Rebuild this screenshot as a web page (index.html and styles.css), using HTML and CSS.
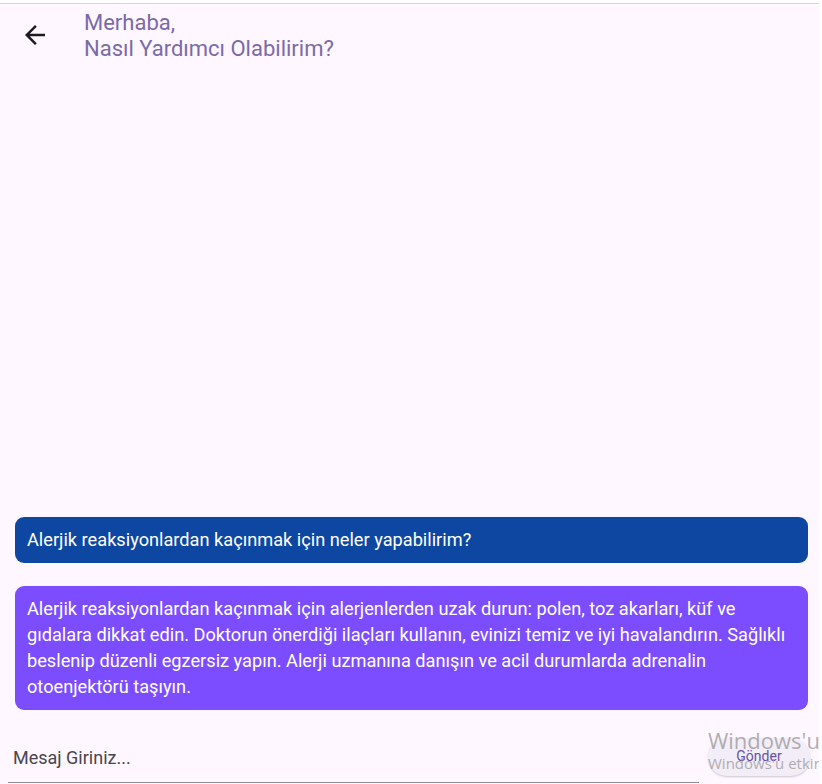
FILE: index.html
```html
<!DOCTYPE html>
<html lang="tr">
<head>
<meta charset="utf-8">
<title>Sohbet</title>
<link rel="stylesheet" href="styles.css">
</head>
<body>
<div class="app">
  <header class="topbar">
    <button class="back" aria-label="Geri">
      <svg width="30" height="30" viewBox="0 0 24 24"><path d="M20 11H7.83l5.59-5.59L12 4l-8 8 8 8 1.41-1.41L7.83 13H20v-2z" fill="#1d1b20"/></svg>
    </button>
    <h1 class="title">Merhaba,<br>Nasıl Yardımcı Olabilirim?</h1>
  </header>
  <main class="messages">
    <div class="bubble user">Alerjik reaksiyonlardan kaçınmak için neler yapabilirim?</div>
    <div class="bubble bot">Alerjik reaksiyonlardan kaçınmak için alerjenlerden uzak durun: polen, toz akarları, küf ve gıdalara dikkat edin. Doktorun önerdiği ilaçları kullanın, evinizi temiz ve iyi havalandırın. Sağlıklı beslenip düzenli egzersiz yapın. Alerji uzmanına danışın ve acil durumlarda adrenalin otoenjektörü taşıyın.</div>
  </main>
  <footer class="composer">
    <div class="field"><span class="placeholder">Mesaj Giriniz...</span></div>
    <button class="send">Gönder</button>
  </footer>
  <div class="watermark"><span class="wm1">Windows'u</span><span class="wm2">Windows'u etkinleştir</span></div>
</div>
</body>
</html>
```
FILE: styles.css
```css
html, body {
  margin: 0;
  padding: 0;
  background: #ffffff;
  overflow: hidden;
}
.app {
  position: relative;
  margin-top: 3px;
  border-top: 1px solid #d6d6d6;
  width: 819px;
  height: 780px;
  background: #fef7ff;
  display: flex;
  flex-direction: column;
  font-family: Roboto, "Noto Sans", sans-serif;
  overflow: hidden;
}
.topbar {
  display: flex;
  align-items: flex-start;
  padding: 6px 0 0 0;
  height: 64px;
  box-sizing: border-box;
}
.back {
  border: 0;
  background: transparent;
  width: 40px;
  height: 40px;
  margin: 5px 0 0 15px;
  padding: 0;
  display: flex;
  align-items: center;
  justify-content: center;
}
.title {
  margin: 0 0 0 29px;
  font-size: 22px;
  line-height: 26px;
  font-weight: 400;
  color: #7a6aa8;
}
.messages {
  flex: 1;
  display: flex;
  flex-direction: column;
  justify-content: flex-end;
  gap: 23px;
  padding: 0 11px 4px 15px;
}
.bubble {
  border-radius: 9px;
  color: #ffffff;
  font-size: 18.2px;
  line-height: 26px;
  padding: 10px 12px;
}
.user {
  background: #0d47a1;
}
.bot {
  background: #7c4dff;
}
.composer {
  display: flex;
  align-items: flex-end;
  height: 70px;
  box-sizing: border-box;
  padding: 0 9px 1px 8px;
  gap: 9px;
}
.field {
  flex: 1;
  border-bottom: 1px solid #8e8a92;
  height: 45px;
  box-sizing: border-box;
  display: flex;
  align-items: center;
  padding: 0 0 5px 5px;
}
.placeholder {
  font-size: 18px;
  color: #49454f;
}
.send {
  border: 0;
  background: #f3edf7;
  box-shadow: 0 1px 2px rgba(0,0,0,0.2);
  color: #6750a4;
  font-family: Roboto, sans-serif;
  font-size: 14px;
  height: 38px;
  width: 102px;
  border-radius: 19px;
  margin-bottom: 7px;
  padding: 0 0 2px 0;
}
.watermark {
  position: absolute;
  left: 708px;
  top: 722px;
  display: flex;
  flex-direction: column;
  color: rgba(150,150,150,0.75);
  font-family: "Open Sans", "DejaVu Sans", sans-serif;
  white-space: nowrap;
  pointer-events: none;
}
.wm1 {
  font-size: 22px;
  line-height: 28px;
}
.wm2 {
  font-size: 15px;
  line-height: 18px;
}
```
